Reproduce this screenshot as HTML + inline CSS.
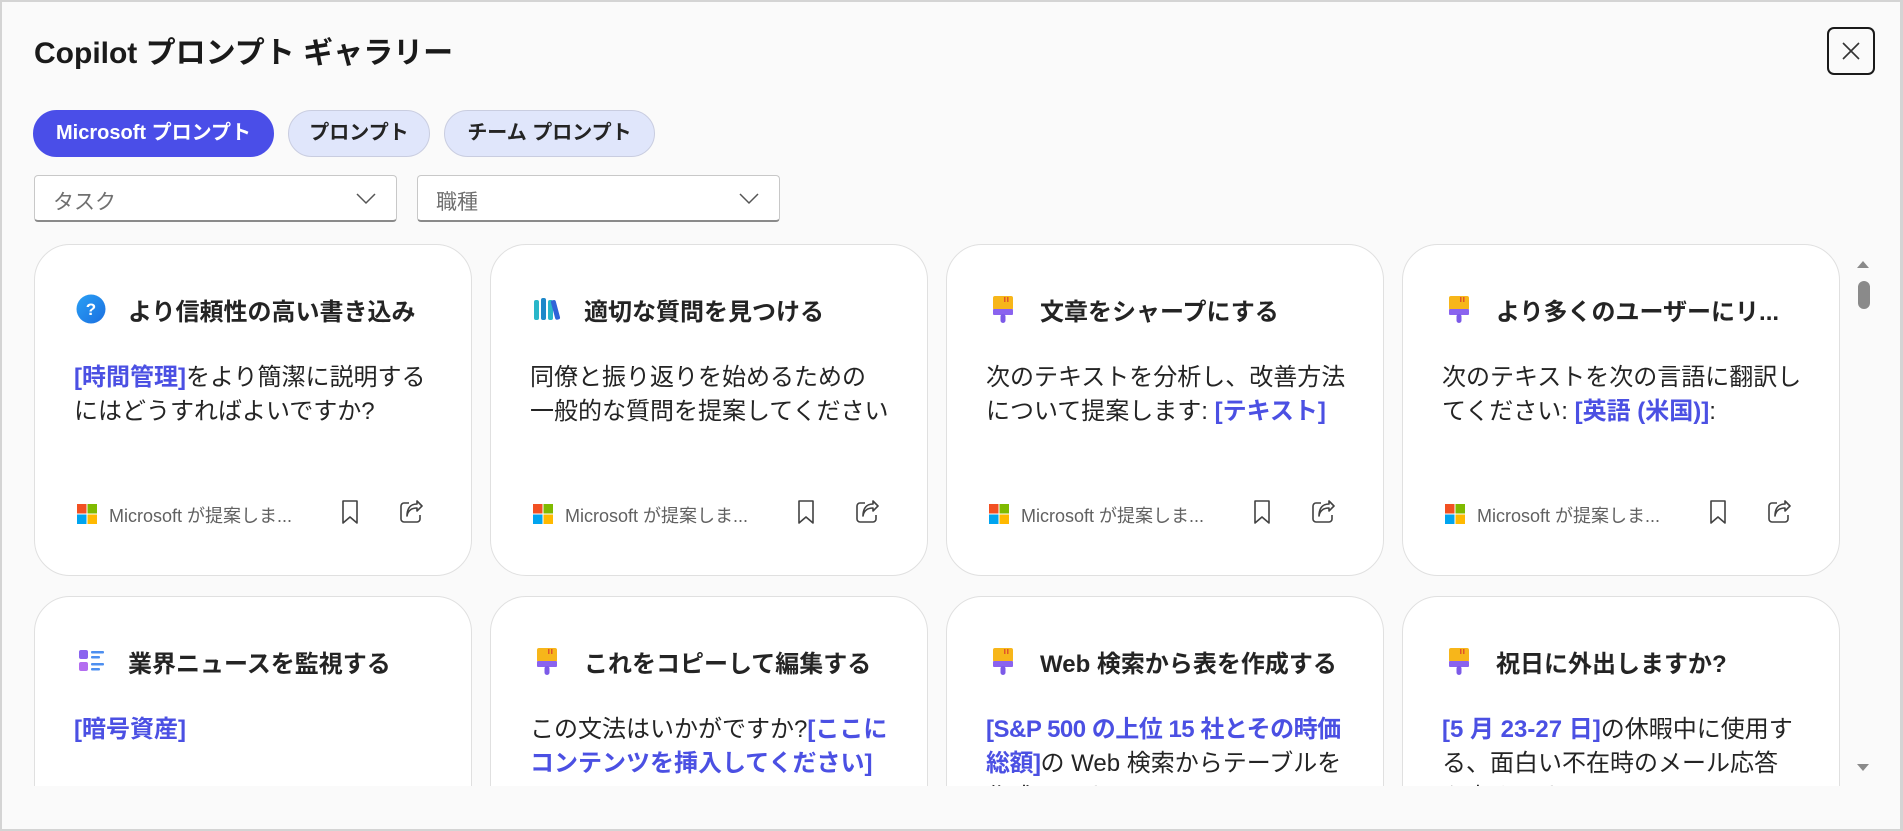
<!DOCTYPE html>
<html><head><meta charset="utf-8"><style>
*{box-sizing:border-box;margin:0;padding:0}
body{width:1903px;height:831px;overflow:hidden;background:#fafafa;font-family:"Liberation Sans","Noto Sans CJK JP",sans-serif;color:#242424;position:relative}
.frame{position:absolute;left:0;top:0;width:1903px;height:831px;border:2px solid #d4d4d4;border-right-width:3px}
h1{position:absolute;left:34px;top:28px;font-size:30px;font-weight:600;color:#1a1a1a;white-space:nowrap}
.close{position:absolute;left:1827px;top:27px;width:48px;height:48px;border:2px solid #1a1a1a;border-radius:7px;background:#fafafa}
.pill{position:absolute;top:110px;height:47px;border-radius:24px;font-size:20px;font-weight:700;line-height:45px;text-align:center;border:1px solid #c9cde0;background:#e0e6fb;color:#242424;white-space:nowrap}
.pill.on{background:#4a4ee8;color:#fff;border-color:#4a4ee8}
.dd{position:absolute;top:175px;height:47px;width:363px;background:#fff;border:1px solid #c8c8c8;border-bottom:2px solid #8a8a8a;border-radius:4px;font-size:21px;color:#707070;padding:10px 0 0 18px}
.dd svg{position:absolute;right:20px;top:17px}
.clip{position:absolute;left:0;top:244px;width:1850px;height:542px;overflow:hidden}
.card{position:absolute;width:438px;height:332px;background:#fff;border:1px solid #e0e0e0;border-radius:36px}
.ic{position:absolute;left:41px;top:49px;width:30px;height:30px}
.t{position:absolute;left:93px;top:47px;font-size:24px;font-weight:700;color:#242424;white-space:nowrap}
.b{position:absolute;left:39px;top:116px;width:361px;font-size:24px;line-height:34px;color:#242424}
.b em{font-style:normal;color:#4b50e3;font-weight:600}
.f{position:absolute;left:42px;top:257px;height:24px;width:360px}
.f .ms{position:absolute;left:0;top:2px}
.f span{position:absolute;left:32px;top:0px;font-size:18px;color:#616161;white-space:nowrap}
.f .bk{position:absolute;left:262px;top:-3px}
.f .sh{position:absolute;left:321px;top:-3px}
.sb{position:absolute;left:1851px;top:244px;width:24px;height:542px}
</style></head><body>
<div class="frame"></div>
<h1>Copilot プロンプト ギャラリー</h1>
<div class="close"><svg width="44" height="44" viewBox="0 0 44 44"><path d="M14 14L30 30M30 14L14 30" stroke="#333" stroke-width="1.6"/></svg></div>
<div class="pill on" style="left:33px;width:241px">Microsoft プロンプト</div>
<div class="pill" style="left:288px;width:142px">プロンプト</div>
<div class="pill" style="left:444px;width:211px">チーム プロンプト</div>
<div class="dd" style="left:34px">タスク<svg width="20" height="12"><path d="M1 1L10 10L19 1" fill="none" stroke="#555" stroke-width="1.5"/></svg></div>
<div class="dd" style="left:417px">職種<svg width="20" height="12"><path d="M1 1L10 10L19 1" fill="none" stroke="#555" stroke-width="1.5"/></svg></div>

<svg width="0" height="0" style="position:absolute"><defs>
<linearGradient id="q" x1="0" y1="0" x2="1" y2="1"><stop offset="0" stop-color="#2aa0f5"/><stop offset="1" stop-color="#1b6fe0"/></linearGradient>
</defs></svg>

<div class="clip">
<div class="card" style="left:34px;top:0">
 <svg class="ic" viewBox="0 0 30 30"><circle cx="15" cy="15" r="14.5" fill="url(#q)"/><text x="15" y="21" text-anchor="middle" font-size="17" font-weight="700" fill="#fff" font-family="Liberation Sans">?</text></svg>
 <div class="t">より信頼性の高い書き込み</div>
 <div class="b"><em>[時間管理]</em>をより簡潔に説明するにはどうすればよいですか?</div>
 <div class="f"><svg class="ms" width="20" height="20"><rect width="9.5" height="9.5" fill="#f25022"/><rect x="10.5" width="9.5" height="9.5" fill="#7fba00"/><rect y="10.5" width="9.5" height="9.5" fill="#00a4ef"/><rect x="10.5" y="10.5" width="9.5" height="9.5" fill="#ffb900"/></svg><span>Microsoft が提案しま...</span>
 <svg class="bk" width="22" height="26"><path d="M4 2H18V24L11 18L4 24Z" fill="none" stroke="#424242" stroke-width="1.6" stroke-linejoin="round"/></svg>
 <svg class="sh" width="26" height="26"><path d="M11 4H6A3 3 0 0 0 3 7V20A3 3 0 0 0 6 23H19A3 3 0 0 0 22 20V16M9 17C10 11 14 9 19 9V12L24 7L19 2V5C12 5 9 10 9 17Z" fill="none" stroke="#424242" stroke-width="1.6" stroke-linejoin="round"/></svg></div>
</div>
<div class="card" style="left:490px;top:0">
 <svg class="ic" viewBox="0 0 30 30"><rect x="2" y="6" width="5" height="20" rx="2" fill="#29b6c9"/><rect x="9" y="4" width="5" height="22" rx="2" fill="#1e88c9"/><rect x="16" y="6" width="5" height="20" rx="2" fill="#29b6c9"/><rect x="21" y="6" width="5" height="20" rx="2" fill="#2f63d8" transform="rotate(-15 23 16)"/></svg>
 <div class="t">適切な質問を見つける</div>
 <div class="b">同僚と振り返りを始めるための<br>一般的な質問を提案してください</div>
 <div class="f"><svg class="ms" width="20" height="20"><rect width="9.5" height="9.5" fill="#f25022"/><rect x="10.5" width="9.5" height="9.5" fill="#7fba00"/><rect y="10.5" width="9.5" height="9.5" fill="#00a4ef"/><rect x="10.5" y="10.5" width="9.5" height="9.5" fill="#ffb900"/></svg><span>Microsoft が提案しま...</span>
 <svg class="bk" width="22" height="26"><path d="M4 2H18V24L11 18L4 24Z" fill="none" stroke="#424242" stroke-width="1.6" stroke-linejoin="round"/></svg>
 <svg class="sh" width="26" height="26"><path d="M11 4H6A3 3 0 0 0 3 7V20A3 3 0 0 0 6 23H19A3 3 0 0 0 22 20V16M9 17C10 11 14 9 19 9V12L24 7L19 2V5C12 5 9 10 9 17Z" fill="none" stroke="#424242" stroke-width="1.6" stroke-linejoin="round"/></svg></div>
</div>
<div class="card" style="left:946px;top:0">
 <svg class="ic" viewBox="0 0 30 30"><rect x="5" y="2" width="20" height="14" rx="2" fill="#f7b61a"/><rect x="16" y="3" width="1.5" height="5" fill="#e0562a"/><rect x="19" y="3" width="1.5" height="5" fill="#e0562a"/><rect x="5" y="15" width="20" height="6" rx="1" fill="#8a63ef"/><rect x="12.5" y="20" width="5" height="9" rx="2.5" fill="#7c5ae8"/></svg>
 <div class="t">文章をシャープにする</div>
 <div class="b">次のテキストを分析し、改善方法<br>について提案します: <em>[テキスト]</em></div>
 <div class="f"><svg class="ms" width="20" height="20"><rect width="9.5" height="9.5" fill="#f25022"/><rect x="10.5" width="9.5" height="9.5" fill="#7fba00"/><rect y="10.5" width="9.5" height="9.5" fill="#00a4ef"/><rect x="10.5" y="10.5" width="9.5" height="9.5" fill="#ffb900"/></svg><span>Microsoft が提案しま...</span>
 <svg class="bk" width="22" height="26"><path d="M4 2H18V24L11 18L4 24Z" fill="none" stroke="#424242" stroke-width="1.6" stroke-linejoin="round"/></svg>
 <svg class="sh" width="26" height="26"><path d="M11 4H6A3 3 0 0 0 3 7V20A3 3 0 0 0 6 23H19A3 3 0 0 0 22 20V16M9 17C10 11 14 9 19 9V12L24 7L19 2V5C12 5 9 10 9 17Z" fill="none" stroke="#424242" stroke-width="1.6" stroke-linejoin="round"/></svg></div>
</div>
<div class="card" style="left:1402px;top:0">
 <svg class="ic" viewBox="0 0 30 30"><rect x="5" y="2" width="20" height="14" rx="2" fill="#f7b61a"/><rect x="16" y="3" width="1.5" height="5" fill="#e0562a"/><rect x="19" y="3" width="1.5" height="5" fill="#e0562a"/><rect x="5" y="15" width="20" height="6" rx="1" fill="#8a63ef"/><rect x="12.5" y="20" width="5" height="9" rx="2.5" fill="#7c5ae8"/></svg>
 <div class="t">より多くのユーザーにリ...</div>
 <div class="b">次のテキストを次の言語に翻訳し<br>てください: <em>[英語 (米国)]</em>:</div>
 <div class="f"><svg class="ms" width="20" height="20"><rect width="9.5" height="9.5" fill="#f25022"/><rect x="10.5" width="9.5" height="9.5" fill="#7fba00"/><rect y="10.5" width="9.5" height="9.5" fill="#00a4ef"/><rect x="10.5" y="10.5" width="9.5" height="9.5" fill="#ffb900"/></svg><span>Microsoft が提案しま...</span>
 <svg class="bk" width="22" height="26"><path d="M4 2H18V24L11 18L4 24Z" fill="none" stroke="#424242" stroke-width="1.6" stroke-linejoin="round"/></svg>
 <svg class="sh" width="26" height="26"><path d="M11 4H6A3 3 0 0 0 3 7V20A3 3 0 0 0 6 23H19A3 3 0 0 0 22 20V16M9 17C10 11 14 9 19 9V12L24 7L19 2V5C12 5 9 10 9 17Z" fill="none" stroke="#424242" stroke-width="1.6" stroke-linejoin="round"/></svg></div>
</div>
<div class="card" style="left:34px;top:352px">
 <svg class="ic" viewBox="0 0 30 30"><rect x="3" y="4" width="9" height="9" rx="2" fill="#8a63ef"/><rect x="3" y="16" width="9" height="9" rx="2" fill="#b36df0"/><rect x="15" y="5" width="13" height="2.5" rx="1" fill="#4d8ff0"/><rect x="15" y="10" width="9" height="2.5" rx="1" fill="#4d8ff0"/><rect x="15" y="17" width="13" height="2.5" rx="1" fill="#4d8ff0"/><rect x="15" y="22" width="9" height="2.5" rx="1" fill="#4d8ff0"/></svg>
 <div class="t">業界ニュースを監視する</div>
 <div class="b"><em>[暗号資産]</em></div>
</div>
<div class="card" style="left:490px;top:352px">
 <svg class="ic" viewBox="0 0 30 30"><rect x="5" y="2" width="20" height="14" rx="2" fill="#f7b61a"/><rect x="16" y="3" width="1.5" height="5" fill="#e0562a"/><rect x="19" y="3" width="1.5" height="5" fill="#e0562a"/><rect x="5" y="15" width="20" height="6" rx="1" fill="#8a63ef"/><rect x="12.5" y="20" width="5" height="9" rx="2.5" fill="#7c5ae8"/></svg>
 <div class="t">これをコピーして編集する</div>
 <div class="b" style="width:380px">この文法はいかがですか?<em>[ここに<br>コンテンツを挿入してください]</em></div>
</div>
<div class="card" style="left:946px;top:352px">
 <svg class="ic" viewBox="0 0 30 30"><rect x="5" y="2" width="20" height="14" rx="2" fill="#f7b61a"/><rect x="16" y="3" width="1.5" height="5" fill="#e0562a"/><rect x="19" y="3" width="1.5" height="5" fill="#e0562a"/><rect x="5" y="15" width="20" height="6" rx="1" fill="#8a63ef"/><rect x="12.5" y="20" width="5" height="9" rx="2.5" fill="#7c5ae8"/></svg>
 <div class="t" style="font-weight:600">Web 検索から表を作成する</div>
 <div class="b" style="width:380px"><em style="letter-spacing:-0.5px">[S&amp;P 500 の上位 15 社とその時価<br>総額]</em>の Web 検索からテーブルを<br>作成します</div>
</div>
<div class="card" style="left:1402px;top:352px">
 <svg class="ic" viewBox="0 0 30 30"><rect x="5" y="2" width="20" height="14" rx="2" fill="#f7b61a"/><rect x="16" y="3" width="1.5" height="5" fill="#e0562a"/><rect x="19" y="3" width="1.5" height="5" fill="#e0562a"/><rect x="5" y="15" width="20" height="6" rx="1" fill="#8a63ef"/><rect x="12.5" y="20" width="5" height="9" rx="2.5" fill="#7c5ae8"/></svg>
 <div class="t">祝日に外出しますか?</div>
 <div class="b" style="width:380px"><em>[5 月 23-27 日]</em>の休暇中に使用す<br>る、面白い不在時のメール応答<br>を書きます</div>
</div>
</div>
<svg class="sb" viewBox="0 0 24 542"><path d="M6 24L12 17L18 24Z" fill="#8a8a8a"/><rect x="7" y="37" width="12" height="28" rx="6" fill="#8a8a8a"/><path d="M6 520L12 527L18 520Z" fill="#8a8a8a"/></svg>
</body></html>
